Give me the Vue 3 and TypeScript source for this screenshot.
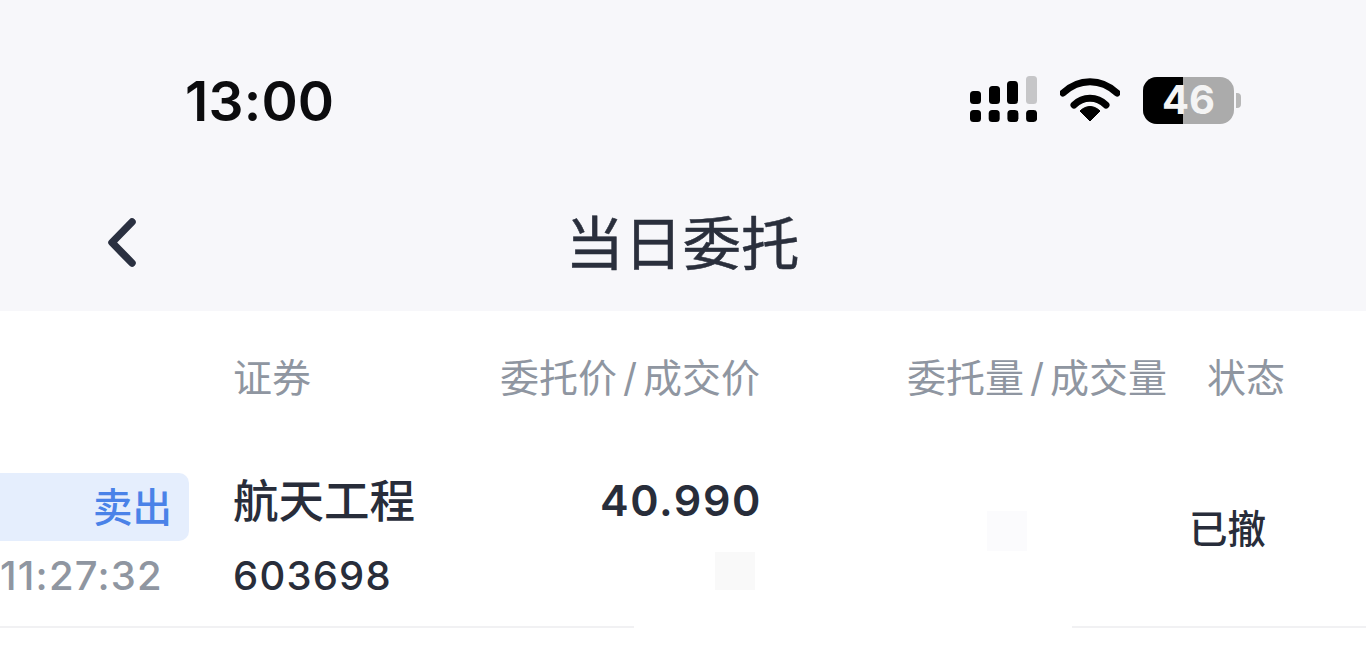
<script setup lang="ts">
const dots = [0, 1, 2, 3]
</script>

<template>
  <div class="page">
    <header class="top">
      <div class="status">
        <span class="time">13:00</span>
        <div class="indicators">
          <svg class="signal" width="68" height="48" viewBox="0 0 68 48">
            <rect x="1" y="15" width="11" height="13" rx="3.5" fill="#000" />
            <rect x="20" y="10" width="11" height="18" rx="3.5" fill="#000" />
            <rect x="38" y="5" width="11" height="23" rx="3.5" fill="#000" />
            <rect x="57" y="0" width="11" height="28" rx="3.5" fill="#c6c6c8" />
            <rect v-for="d in dots" :key="d" :x="1 + d * 18.7" y="34" width="11" height="12" rx="3.5" fill="#000" />
          </svg>
          <svg class="wifi" width="60" height="44" viewBox="0 0 60 44">
            <path d="M3 15 C19 0 41 0 57 15" fill="none" stroke="#000" stroke-width="7" stroke-linecap="round" />
            <path d="M14 27 C23 18 37 18 46 27" fill="none" stroke="#000" stroke-width="7" stroke-linecap="round" />
            <path d="M20 33 C26 27 34 27 40 33 L30 43 Z" fill="#000" stroke="#000" stroke-width="1" stroke-linejoin="round" />
          </svg>
          <div class="battery">
            <div class="cell">
              <div class="fill"></div>
              <span class="level">46</span>
            </div>
            <span class="nub"></span>
          </div>
        </div>
      </div>
      <nav class="nav">
        <svg class="back" width="34" height="52" viewBox="0 0 34 52">
          <path d="M27 5 L7 25.500 L27 46" fill="none" stroke="#2a3040" stroke-width="7.500" stroke-linecap="round" stroke-linejoin="round" />
        </svg>
        <h1 class="title">当日委托</h1>
      </nav>
    </header>

    <main class="table">
      <div class="head grid">
        <span></span>
        <span>证券</span>
        <span class="right">委托价<i class="slash">/</i>成交价</span>
        <span class="right">委托量<i class="slash">/</i>成交量</span>
        <span class="right">状态</span>
      </div>
      <div class="row grid">
        <div class="side">
          <div class="tag">卖出</div>
          <div class="clock">11:27:32</div>
        </div>
        <div class="security">
          <div class="name">航天工程</div>
          <div class="code">603698</div>
        </div>
        <div class="price">
          <div class="amount">40.990</div>
          <div class="blot grey"></div>
        </div>
        <div class="volume">
          <div class="blot pale"></div>
        </div>
        <div class="state">已撤</div>
        <div class="mask"></div>
      </div>
    </main>
  </div>
</template>

<style>
html, body { margin: 0; background: #fff; overflow: hidden; }
</style>

<style scoped>
.page {
  width: 1366px;
  height: 649px;
  overflow: hidden;
  background: #fff;
  font-family: Inter, "Noto Sans CJK SC", sans-serif;
}
.top {
  height: 311px;
  background: #f7f7fa;
  display: flex;
  flex-direction: column;
}
.status {
  height: 200px;
  box-sizing: border-box;
  padding: 0 125px 0 185px;
  display: flex;
  justify-content: space-between;
  align-items: center;
}
.time {
  margin-top: 3px;
  font-size: 55px;
  font-weight: 600;
  color: #0c0c0e;
  line-height: 1;
  letter-spacing: 0.2px;
}
.indicators {
  display: flex;
  align-items: center;
  gap: 23px;
}
.battery {
  display: flex;
  align-items: center;
  gap: 2px;
}
.cell {
  position: relative;
  width: 91px;
  height: 47px;
  border-radius: 14px;
  background: #ababab;
  overflow: hidden;
  display: flex;
  align-items: center;
  justify-content: center;
}
.fill {
  position: absolute;
  left: 0;
  top: 0;
  bottom: 0;
  width: 40px;
  background: #000;
}
.level {
  position: relative;
  font-size: 40px;
  font-weight: 700;
  color: #f4f4f4;
  line-height: 1;
  font-family: Inter, sans-serif;
}
.nub {
  width: 5px;
  height: 15px;
  border-radius: 0 4px 4px 0;
  background: #b8b8b8;
}
.nav {
  position: relative;
  flex: 1;
  display: flex;
  align-items: flex-start;
  justify-content: center;
}
.back {
  position: absolute;
  left: 105px;
  top: 17px;
}
.title {
  margin: 6px 0 0 -1px;
  font-size: 58.500px;
  line-height: 76px;
  font-weight: 400;
  color: #2a2f3c;
  -webkit-text-stroke: 0.5px #2a2f3c;
}
.grid {
  display: grid;
  grid-template-columns: 233px 200px 327px 407px 118px;
}
.head {
  height: 133px;
  box-sizing: border-box;
  padding-top: 40px;
  font-size: 39px;
  line-height: 54px;
  color: #8f96a1;
  white-space: nowrap;
}
.slash {
  font-style: normal;
  padding: 0 6px;
}
.right { text-align: right; }
.row {
  position: relative;
  height: 182px;
  border-bottom: 2px solid #f1f1f3;
  color: #282d3a;
}
.side {
  width: 189px;
  padding-top: 29px;
}
.tag {
  height: 68px;
  box-sizing: border-box;
  padding-right: 17px;
  background: #e5eefd;
  border-radius: 0 10px 10px 0;
  color: #4a82e8;
  font-size: 39.500px;
  font-weight: 500;
  line-height: 70px;
  text-align: right;
}
.clock {
  margin-top: 11px;
  font-size: 40px;
  line-height: 48px;
  font-weight: 500;
  color: #8f96a1;
  white-space: nowrap;
  letter-spacing: 1.2px;
}
.security { padding-top: 26px; }
.name {
  font-size: 45.500px;
  line-height: 64px;
  font-weight: 500;
  white-space: nowrap;
}
.code {
  margin-top: 18px;
  font-size: 40px;
  line-height: 48px;
  font-weight: 500;
  letter-spacing: 1.2px;
}
.price {
  padding-top: 30px;
  display: flex;
  flex-direction: column;
  align-items: flex-end;
}
.amount {
  margin-right: -2px;
  font-size: 43px;
  line-height: 52px;
  font-weight: 600;
  letter-spacing: 1.6px;
}
.blot { width: 40px; }
.blot.grey {
  height: 38px;
  margin-top: 26px;
  margin-right: 5px;
  background: #f9f9f9;
}
.volume { position: relative; }
.blot.pale {
  position: absolute;
  left: 227px;
  top: 67px;
  height: 40px;
  background: #fbfbfd;
}
.state {
  padding: 58px 19px 0 0;
  font-size: 38.500px;
  font-weight: 500;
  line-height: 54px;
  text-align: right;
  white-space: nowrap;
}
.mask {
  position: absolute;
  left: 634px;
  bottom: -4px;
  width: 438px;
  height: 6px;
  background: #fff;
}
</style>
